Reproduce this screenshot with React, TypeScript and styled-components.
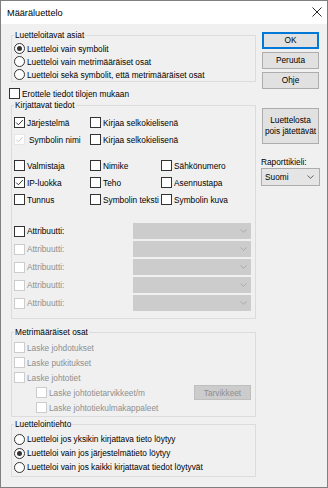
import React from "react";
import styled, { createGlobalStyle } from "styled-components";

const GlobalStyle = createGlobalStyle`
  html, body {
    margin: 0;
    padding: 0;
    background: #f0f0f0;
  }
  body {
    font-family: "Liberation Sans", Arial, sans-serif;
    font-size: 8.3px;
    color: #000;
  }
  * {
    box-sizing: border-box;
  }
`;

const Window = styled.div`
  width: 328px;
  height: 488px;
  border: 1px solid #7f7f7f;
  background: #f0f0f0;
  display: flex;
  flex-direction: column;
`;

const TitleBar = styled.div`
  height: 23px;
  flex: none;
  background: #fff;
  display: flex;
  align-items: center;
  justify-content: space-between;
  padding: 0 5px 0 6px;
`;

const Title = styled.span`
  font-size: 9.2px;
  line-height: 12px;
`;

const CloseIcon = styled.svg`
  width: 10px;
  height: 10px;
  margin-top: -1px;
`;

const Body = styled.div`
  display: grid;
  grid-template-columns: 247px 59px;
  column-gap: 5px;
  padding: 0 0 0 8px;
`;

const LeftColumn = styled.div`
  display: flex;
  flex-direction: column;
`;

const RightColumn = styled.div`
  display: flex;
  flex-direction: column;
  padding-top: 8px;
`;

const Group = styled.div<{ $mt: number; $pt: number; $pb: number }>`
  position: relative;
  margin: ${(p) => p.$mt}px 0 0 2px;
  border: 1px solid #dcdcdc;
  padding: ${(p) => p.$pt}px 4px ${(p) => p.$pb}px 2px;
`;

const Caption = styled.span`
  position: absolute;
  top: -6px;
  left: 2px;
  padding: 0 1px;
  line-height: 11px;
  background: #f0f0f0;
`;

const Row = styled.div<{ $h: number; $indent?: number; $disabled?: boolean }>`
  height: ${(p) => p.$h}px;
  display: flex;
  align-items: center;
  padding-left: ${(p) => p.$indent ?? 0}px;
  color: ${(p) => (p.$disabled ? "#8f8f8f" : "#000")};
  white-space: nowrap;
`;

const SpreadRow = styled(Row)`
  justify-content: space-between;
`;

const StandaloneRow = styled(Row)`
  margin-top: 5px;
`;

const Label = styled.span`
  display: flex;
  align-items: center;
  gap: 1px;
`;

const CheckGrid = styled.div<{ $cols: string; $mt: number }>`
  display: grid;
  grid-template-columns: ${(p) => p.$cols};
  grid-auto-rows: 17px;
  margin-top: ${(p) => p.$mt}px;
`;

const GridCell = styled.div`
  display: flex;
  align-items: center;
  gap: 1px;
  white-space: nowrap;
`;

const AttributeList = styled.div`
  margin-top: 14px;
`;

const Box = styled.span<{ $disabled?: boolean; $faint?: boolean }>`
  width: 11px;
  height: 11px;
  flex: none;
  display: inline-flex;
  align-items: center;
  justify-content: center;
  background: #fff;
  border: 1px solid
    ${(p) => (p.$faint ? "#e6e6e6" : p.$disabled ? "#cccccc" : "#333")};
`;

const Radio = styled.span<{ $on?: boolean }>`
  width: 11px;
  height: 11px;
  flex: none;
  border-radius: 50%;
  border: 1px solid #333;
  background: #fff;
  display: inline-flex;
  align-items: center;
  justify-content: center;
  &::after {
    content: "";
    width: 5px;
    height: 5px;
    border-radius: 50%;
    background: ${(p) => (p.$on ? "#333" : "transparent")};
  }
`;

const Plain = styled.span<{ $pl?: number }>`
  padding-left: ${(p) => p.$pl ?? 1}px;
`;

const Dropdown = styled.div`
  width: 118px;
  height: 16px;
  background: #cccccc;
  display: flex;
  align-items: center;
  justify-content: flex-end;
  padding-right: 4px;
`;

const Button = styled.div<{ $primary?: boolean; $h?: number; $mt?: number }>`
  height: ${(p) => p.$h ?? 17}px;
  width: 57px;
  margin: ${(p) => p.$mt ?? 0}px 0 0 1px;
  background: #e1e1e1;
  border: 1px solid ${(p) => (p.$primary ? "#0078d7" : "#adadad")};
  box-shadow: ${(p) => (p.$primary ? "inset 0 0 0 1px #0078d7" : "none")};
  display: flex;
  align-items: center;
  justify-content: center;
  text-align: center;
  line-height: 11px;
`;

const SmallButton = styled.div`
  width: 57px;
  height: 15px;
  background: #cccccc;
  border: 1px solid #bfbfbf;
  color: #8f8f8f;
  display: flex;
  align-items: center;
  justify-content: center;
`;

const FieldLabel = styled.div`
  margin-top: 13px;
  line-height: 10px;
`;

const Select = styled.div`
  margin-top: 1px;
  width: 59px;
  height: 18px;
  background: #e5e5e5;
  border: 1px solid #adadad;
  display: flex;
  align-items: center;
  justify-content: space-between;
  padding: 0 5px 0 3px;
`;

const Check = ({ color = "#333" }: { color?: string }) => (
  <svg width="9" height="9" viewBox="0 0 9 9">
    <polyline
      points="1.2,4.6 3.4,6.8 7.8,2"
      fill="none"
      stroke={color}
      strokeWidth="1"
    />
  </svg>
);

const Chevron = ({ color }: { color: string }) => (
  <svg width="7" height="4" viewBox="0 0 7 4">
    <polyline points="0.5,0.5 3.5,3.3 6.5,0.5" fill="none" stroke={color} strokeWidth="0.9" />
  </svg>
);

interface CheckItemProps {
  text: string;
  checked?: boolean;
  disabled?: boolean;
}

const CheckItem: React.FC<CheckItemProps> = ({ text, checked, disabled }) => (
  <GridCell>
    <Box $disabled={disabled}>{checked && <Check />}</Box>
    <Plain>{text}</Plain>
  </GridCell>
);

const fieldItems: CheckItemProps[] = [
  { text: "Valmistaja" },
  { text: "Nimike" },
  { text: "Sähkönumero" },
  { text: "IP-luokka", checked: true },
  { text: "Teho" },
  { text: "Asennustapa" },
  { text: "Tunnus" },
  { text: "Symbolin teksti" },
  { text: "Symbolin kuva" },
];

const metricItems = [
  { text: "Laske johdotukset", indent: 0 },
  { text: "Laske putkitukset", indent: 0 },
  { text: "Laske johtotiet", indent: 0 },
  { text: "Laske johtotietarvikkeet/m", indent: 22, button: "Tarvikkeet" },
  { text: "Laske johtotiekulmakappaleet", indent: 22 },
];

const listingRules = [
  { text: "Luetteloi jos yksikin kirjattava tieto löytyy", on: false },
  { text: "Luetteloi vain jos järjestelmätieto löytyy", on: true },
  { text: "Luetteloi vain jos kaikki kirjattavat tiedot löytyvät", on: false },
];

const App: React.FC = () => {
  return (
    <>
      <GlobalStyle />
      <Window>
        <TitleBar>
          <Title>Määräluettelo</Title>
          <CloseIcon viewBox="0 0 10 10">
            <path d="M0.5 0.5 L9.5 9.5 M9.5 0.5 L0.5 9.5" stroke="#111" strokeWidth="0.9" />
          </CloseIcon>
        </TitleBar>

        <Body>
          <LeftColumn>
            <Group $mt={11} $pt={6} $pb={0}>
              <Caption>Luetteloitavat asiat</Caption>
              <Row $h={13}>
                <Label>
                  <Radio $on />
                  <Plain>Luetteloi vain symbolit</Plain>
                </Label>
              </Row>
              <Row $h={13}>
                <Label>
                  <Radio />
                  <Plain>Luetteloi vain metrimääräiset osat</Plain>
                </Label>
              </Row>
              <Row $h={13}>
                <Label>
                  <Radio />
                  <Plain>Luetteloi sekä symbolit, että metrimääräiset osat</Plain>
                </Label>
              </Row>
            </Group>

            <StandaloneRow $h={13}>
              <Label>
                <Box />
                <Plain>Erottele tiedot tilojen mukaan</Plain>
              </Label>
            </StandaloneRow>

            <Group $mt={5} $pt={8} $pb={6}>
              <Caption>Kirjattavat tiedot</Caption>
              <CheckGrid $cols="76px 1fr" $mt={0}>
                <CheckItem text="Järjestelmä" checked />
                <CheckItem text="Kirjaa selkokielisenä" />
                <GridCell>
                  <Box $faint>
                    <Check color="#c8c8c8" />
                  </Box>
                  <Plain $pl={3}>Symbolin nimi</Plain>
                </GridCell>
                <CheckItem text="Kirjaa selkokielisenä" />
              </CheckGrid>

              <CheckGrid $cols="76px 71px 1fr" $mt={9}>
                {fieldItems.map((item) => (
                  <CheckItem key={item.text} {...item} />
                ))}
              </CheckGrid>

              <AttributeList>
                {[0, 1, 2, 3, 4].map((i) => (
                  <SpreadRow key={`attr-${i}`} $h={18} $disabled={i > 0}>
                    <Label>
                      <Box $disabled={i > 0} />
                      <Plain>Attribuutti:</Plain>
                    </Label>
                    <Dropdown>
                      <Chevron color="#a6a6a6" />
                    </Dropdown>
                  </SpreadRow>
                ))}
              </AttributeList>
            </Group>

            <Group $mt={13} $pt={7} $pb={1}>
              <Caption>Metrimääräiset osat</Caption>
              {metricItems.map((item) => (
                <SpreadRow key={item.text} $h={15} $indent={item.indent} $disabled>
                  <Label>
                    <Box $disabled />
                    <Plain>{item.text}</Plain>
                  </Label>
                  {item.button && <SmallButton>{item.button}</SmallButton>}
                </SpreadRow>
              ))}
            </Group>

            <Group $mt={7} $pt={7} $pb={2}>
              <Caption>Luettelointiehto</Caption>
              {listingRules.map((rule) => (
                <Row key={rule.text} $h={14}>
                  <Label>
                    <Radio $on={rule.on} />
                    <Plain>{rule.text}</Plain>
                  </Label>
                </Row>
              ))}
            </Group>
          </LeftColumn>

          <RightColumn>
            <Button $primary>OK</Button>
            <Button $mt={3}>Peruuta</Button>
            <Button $mt={3}>Ohje</Button>
            <Button $mt={19} $h={36}>
              Luettelosta
              <br />
              pois jätettävät
            </Button>
            <FieldLabel>Raporttikieli:</FieldLabel>
            <Select>
              <span>Suomi</span>
              <Chevron color="#555" />
            </Select>
          </RightColumn>
        </Body>
      </Window>
    </>
  );
};

export default App;
